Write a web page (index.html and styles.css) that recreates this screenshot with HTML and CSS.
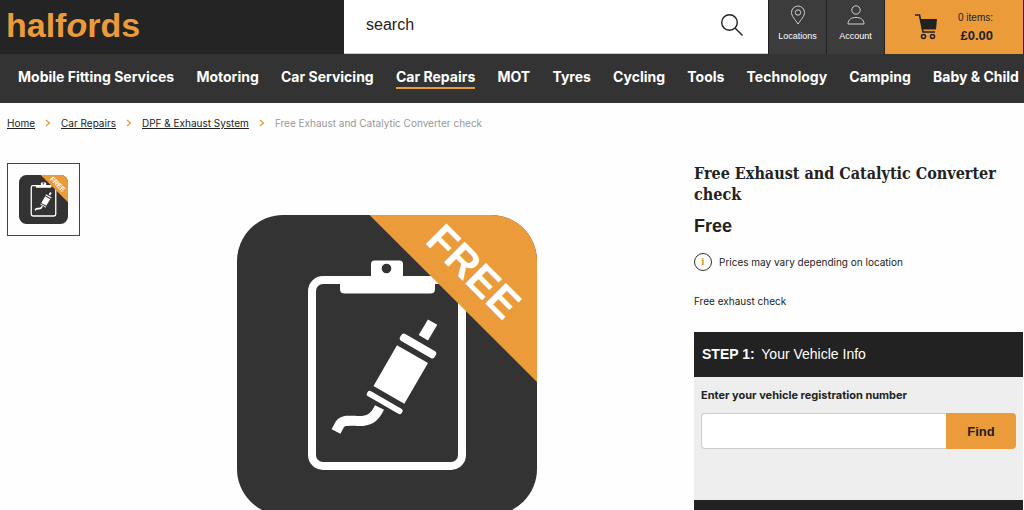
FILE: index.html
```html
<!DOCTYPE html>
<html lang="en">
<head>
    <meta charset="UTF-8">
    <meta name="viewport" content="width=device-width, initial-scale=1.0">
    <title>Free Exhaust and Catalytic Converter check | Halfords</title>
    <link rel="stylesheet" href="styles.css">
</head>
<body>
    <header class="header">
        <div class="brand">
            <a class="logo" href="#">half<i>o</i>rds</a>
        </div>
        <form class="search">
            <input class="search-input" type="text" placeholder="search" aria-label="search">
            <button class="search-btn" type="button" aria-label="Submit search">
                <svg width="24" height="24" viewBox="0 0 24 24" fill="none" stroke="#222" stroke-width="1.4">
                    <circle cx="9.500" cy="9.500" r="7.800"/>
                    <path d="M15 15l7.500 7.500"/>
                </svg>
            </button>
        </form>
        <a class="tool" href="#">
            <svg width="20" height="20" viewBox="0 0 20 20" fill="none" stroke="#d0d0d0" stroke-width="1">
                <path d="M10 19C7 14.500 3.500 11 3.500 7.500a6.500 6.500 0 0 1 13 0C16.500 11 13 14.500 10 19z"/>
                <circle cx="10" cy="7.500" r="2.700"/>
            </svg>
            <span>Locations</span>
        </a>
        <a class="tool" href="#">
            <svg width="20" height="20" viewBox="0 0 20 20" fill="none" stroke="#d0d0d0" stroke-width="1">
                <circle cx="10" cy="5" r="4.200"/>
                <path d="M2 19c0-4.500 3.500-6.500 8-6.500s8 2 8 6.500z"/>
            </svg>
            <span>Account</span>
        </a>
        <a class="basket" href="#">
            <svg width="24" height="26" viewBox="0 0 24 26">
                <path d="M1 1h4.500l3.500 17h12" fill="none" stroke="#222" stroke-width="1.600"/>
                <path d="M6 5h17l-1 10.500H8.300z" fill="#222"/>
                <g fill="none" stroke="#222" stroke-width="1.600">
                    <circle cx="9.500" cy="22.500" r="2"/>
                    <circle cx="18.500" cy="22.500" r="2"/>
                </g>
            </svg>
            <span class="basket-text">0 items:<strong>£0.00</strong></span>
        </a>
    </header>

    <nav class="nav">
        <a href="#">Mobile Fitting Services</a>
        <a href="#">Motoring</a>
        <a href="#">Car Servicing</a>
        <a href="#" class="active">Car Repairs</a>
        <a href="#">MOT</a>
        <a href="#">Tyres</a>
        <a href="#">Cycling</a>
        <a href="#">Tools</a>
        <a href="#">Technology</a>
        <a href="#">Camping</a>
        <a href="#">Baby &amp; Child</a>
    </nav>

    <div class="breadcrumb">
        <a href="#">Home</a>
        <svg width="6" height="8" viewBox="0 0 6 8"><path d="M1 1l3.500 3L1 7"/></svg>
        <a href="#">Car Repairs</a>
        <svg width="6" height="8" viewBox="0 0 6 8"><path d="M1 1l3.500 3L1 7"/></svg>
        <a href="#">DPF &amp; Exhaust System</a>
        <svg width="6" height="8" viewBox="0 0 6 8"><path d="M1 1l3.500 3L1 7"/></svg>
        <span>Free Exhaust and Catalytic Converter check</span>
    </div>

    <main class="product">
        <a class="thumb" href="#" aria-label="Show image 1">
            <svg viewBox="0 0 300 300"><use href="#exhaust"/></svg>
        </a>

        <div class="photo">
            <svg viewBox="0 0 300 300">
                <defs>
                    <clipPath id="tile"><rect width="300" height="300" rx="46"/></clipPath>
                </defs>
                <g id="exhaust" clip-path="url(#tile)">
                    <rect width="300" height="300" fill="#333"/>
                    <!-- clipboard -->
                    <rect x="75" y="65" width="150" height="186" rx="11" fill="none" stroke="#fff" stroke-width="8"/>
                    <path d="M103 62h95v12q0 4.500-4.500 4.500h-86q-4.500 0-4.500-4.500z" fill="#fff"/>
                    <path d="M134 65V49q0-3.500 3.500-3.500h25q3.500 0 3.500 3.500v16z" fill="#fff"/>
                    <circle cx="149.500" cy="53.500" r="4.800" fill="#333"/>
                    <!-- exhaust -->
                    <path d="M191 104.500l9.300 5.300-9.300 15.700-9.300-5.500zM160 130.300l31 17.700-23.700 40.700-30.800-17.700z" fill="#fff"/>
                    <g fill="#fff">
                        <rect x="-20" y="-4" width="40" height="8" rx="3" transform="translate(181 131) rotate(30)"/>
                        <rect x="-20" y="-3" width="40" height="6" rx="2.500" transform="translate(147.700 187.500) rotate(30)"/>
                    </g>
                    <path d="M142.500 192.500C137 204 131 206 122 206c-6 0-15-2-19 3l-4 7.500" fill="none" stroke="#fff" stroke-width="10"/>
                    <!-- corner ribbon -->
                    <path d="M132.500 0H300v167z" fill="#ec9b3b"/>
                    <text class="ribbon-text" transform="translate(187 27) rotate(45)">FREE</text>
                </g>
            </svg>
        </div>

        <section class="info">
            <h1>Free Exhaust and Catalytic Converter check</h1>
            <p class="price">Free</p>
            <p class="note"><span class="note-icon">i</span>Prices may vary depending on location</p>
            <p class="desc">Free exhaust check</p>

            <div class="step">
                <h2 class="step-title"><strong>STEP 1:</strong> Your Vehicle Info</h2>
                <form class="step-body">
                    <label for="vrn">Enter your vehicle registration number</label>
                    <div class="field">
                        <input id="vrn" type="text">
                        <button type="button">Find</button>
                    </div>
                </form>
                <div class="step-title"></div>
            </div>
        </section>
    </main>
</body>
</html>
```
FILE: styles.css
```css
* {
    box-sizing: border-box;
}

body {
    margin: 0;
    background: #fefefe;
    color: #222;
    font-family: Inter, "Liberation Sans", Arial, sans-serif;
    font-size: 10px;
    line-height: 14px;
}

a {
    color: inherit;
    text-decoration: none;
}

/* Header */
.header {
    display: flex;
    height: 54px;
    background: #242424;
}

.brand {
    flex: 0 0 344px;
    padding: 4px 6px;
}

.logo {
    color: #ec9b3b;
    font-family: "Liberation Sans", Arial, sans-serif;
    font-size: 34px;
    line-height: 42px;
    font-weight: bold;
}

.search {
    flex: 1;
    display: flex;
    align-items: center;
    padding: 0 24px 4px 22px;
    background: #fff;
    border-bottom: 1px solid #ccc;
}

.search-input {
    flex: 1;
    min-width: 0;
    padding: 0;
    border: 0;
    outline: 0;
    font: 16px "Liberation Sans", Arial, sans-serif;
    color: #222;
}

.search-input::placeholder {
    color: #222;
    opacity: 1;
}

.search-btn {
    display: flex;
    padding: 0;
    border: 0;
    background: none;
    cursor: pointer;
}

.tool {
    flex: 0 0 58px;
    display: flex;
    flex-direction: column;
    align-items: center;
    gap: 4px;
    padding-top: 5px;
    background: #3c3c3c;
    border-left: 1px solid #222;
    color: #fff;
    font-family: "Liberation Sans", Arial, sans-serif;
    font-size: 9px;
}

.basket {
    flex: 0 0 140px;
    display: flex;
    align-items: center;
    justify-content: flex-end;
    gap: 20px;
    padding-right: 30px;
    background: #ec9b3b;
    border-left: 1px solid #222;
    border-right: 1px solid #222;
}

.basket-text {
    font-family: "Liberation Sans", Arial, sans-serif;
    line-height: 18px;
    text-align: right;
}

.basket-text strong {
    display: block;
    font-size: 13px;
}

/* Main menu */
.nav {
    display: flex;
    justify-content: space-between;
    height: 49px;
    padding: 13px 5px 0 18px;
    background: #333;
    color: #fff;
    font-size: 14px;
    font-weight: bold;
    line-height: 20px;
    white-space: nowrap;
}

.nav .active {
    height: 22px;
    border-bottom: 2px solid #ec9b3b;
}

/* Breadcrumb */
.breadcrumb {
    display: flex;
    align-items: center;
    gap: 10px;
    padding: 13px 7px 0;
    color: #999;
}

.breadcrumb a {
    color: #222;
    text-decoration: underline;
}

.breadcrumb svg {
    fill: none;
    stroke: #ec9b3b;
    stroke-width: 1.3;
}

/* Product */
.product {
    display: flex;
    align-items: flex-start;
    padding: 33px 1px 0 7px;
}

.thumb {
    flex: 0 0 73px;
    height: 73px;
    padding: 11px;
    border: 1px solid #4a4048;
}

.thumb svg {
    display: block;
}

.photo {
    flex: 1;
    padding-top: 52px;
}

.photo svg {
    display: block;
    width: 300px;
    margin: 0 auto;
}

.ribbon-text {
    fill: #fff;
    font-family: "Liberation Sans", Arial, sans-serif;
    font-size: 42px;
    font-weight: bold;
}

.info {
    flex: 0 0 329px;
}

.info h1 {
    margin: 0;
    font-family: "DejaVu Serif Condensed", "DejaVu Serif", serif;
    font-size: 16px;
    line-height: 21px;
}

.info p {
    margin: 0;
}

.info .price {
    margin-top: 10px;
    font-family: "Liberation Sans", Arial, sans-serif;
    font-size: 18px;
    font-weight: bold;
    line-height: 22px;
}

.info .note {
    display: flex;
    align-items: center;
    gap: 7px;
    margin-top: 16px;
}

.note-icon {
    width: 18px;
    height: 18px;
    border: 1px solid #333;
    border-radius: 50%;
    color: #ec9b3b;
    font: bold 10px/16px "DejaVu Serif", serif;
    text-align: center;
}

.info .desc {
    margin-top: 23px;
}

/* Booking steps */
.step {
    margin-top: 24px;
    background: #eee;
}

.step-title {
    min-height: 45px;
    margin: 0;
    padding: 13px 8px;
    background: #222;
    color: #fff;
    font-family: "Liberation Sans", Arial, sans-serif;
    font-size: 14px;
    font-weight: normal;
    line-height: 19px;
}

.step-title strong {
    margin-right: 3px;
}

.step-body {
    padding: 11px 7px 51px;
}

.step-body label {
    display: block;
    font-size: 11px;
    font-weight: bold;
}

.field {
    display: flex;
    height: 36px;
    margin-top: 11px;
}

.field input {
    flex: 1;
    min-width: 0;
    border: 1px solid #ccc;
    border-right: 0;
    border-radius: 4px 0 0 4px;
    background: #fff;
}

.field button {
    width: 70px;
    border: 0;
    border-radius: 0 4px 4px 0;
    background: #ec9b3b;
    color: #222;
    font: bold 13px "Liberation Sans", Arial, sans-serif;
    cursor: pointer;
}
```
